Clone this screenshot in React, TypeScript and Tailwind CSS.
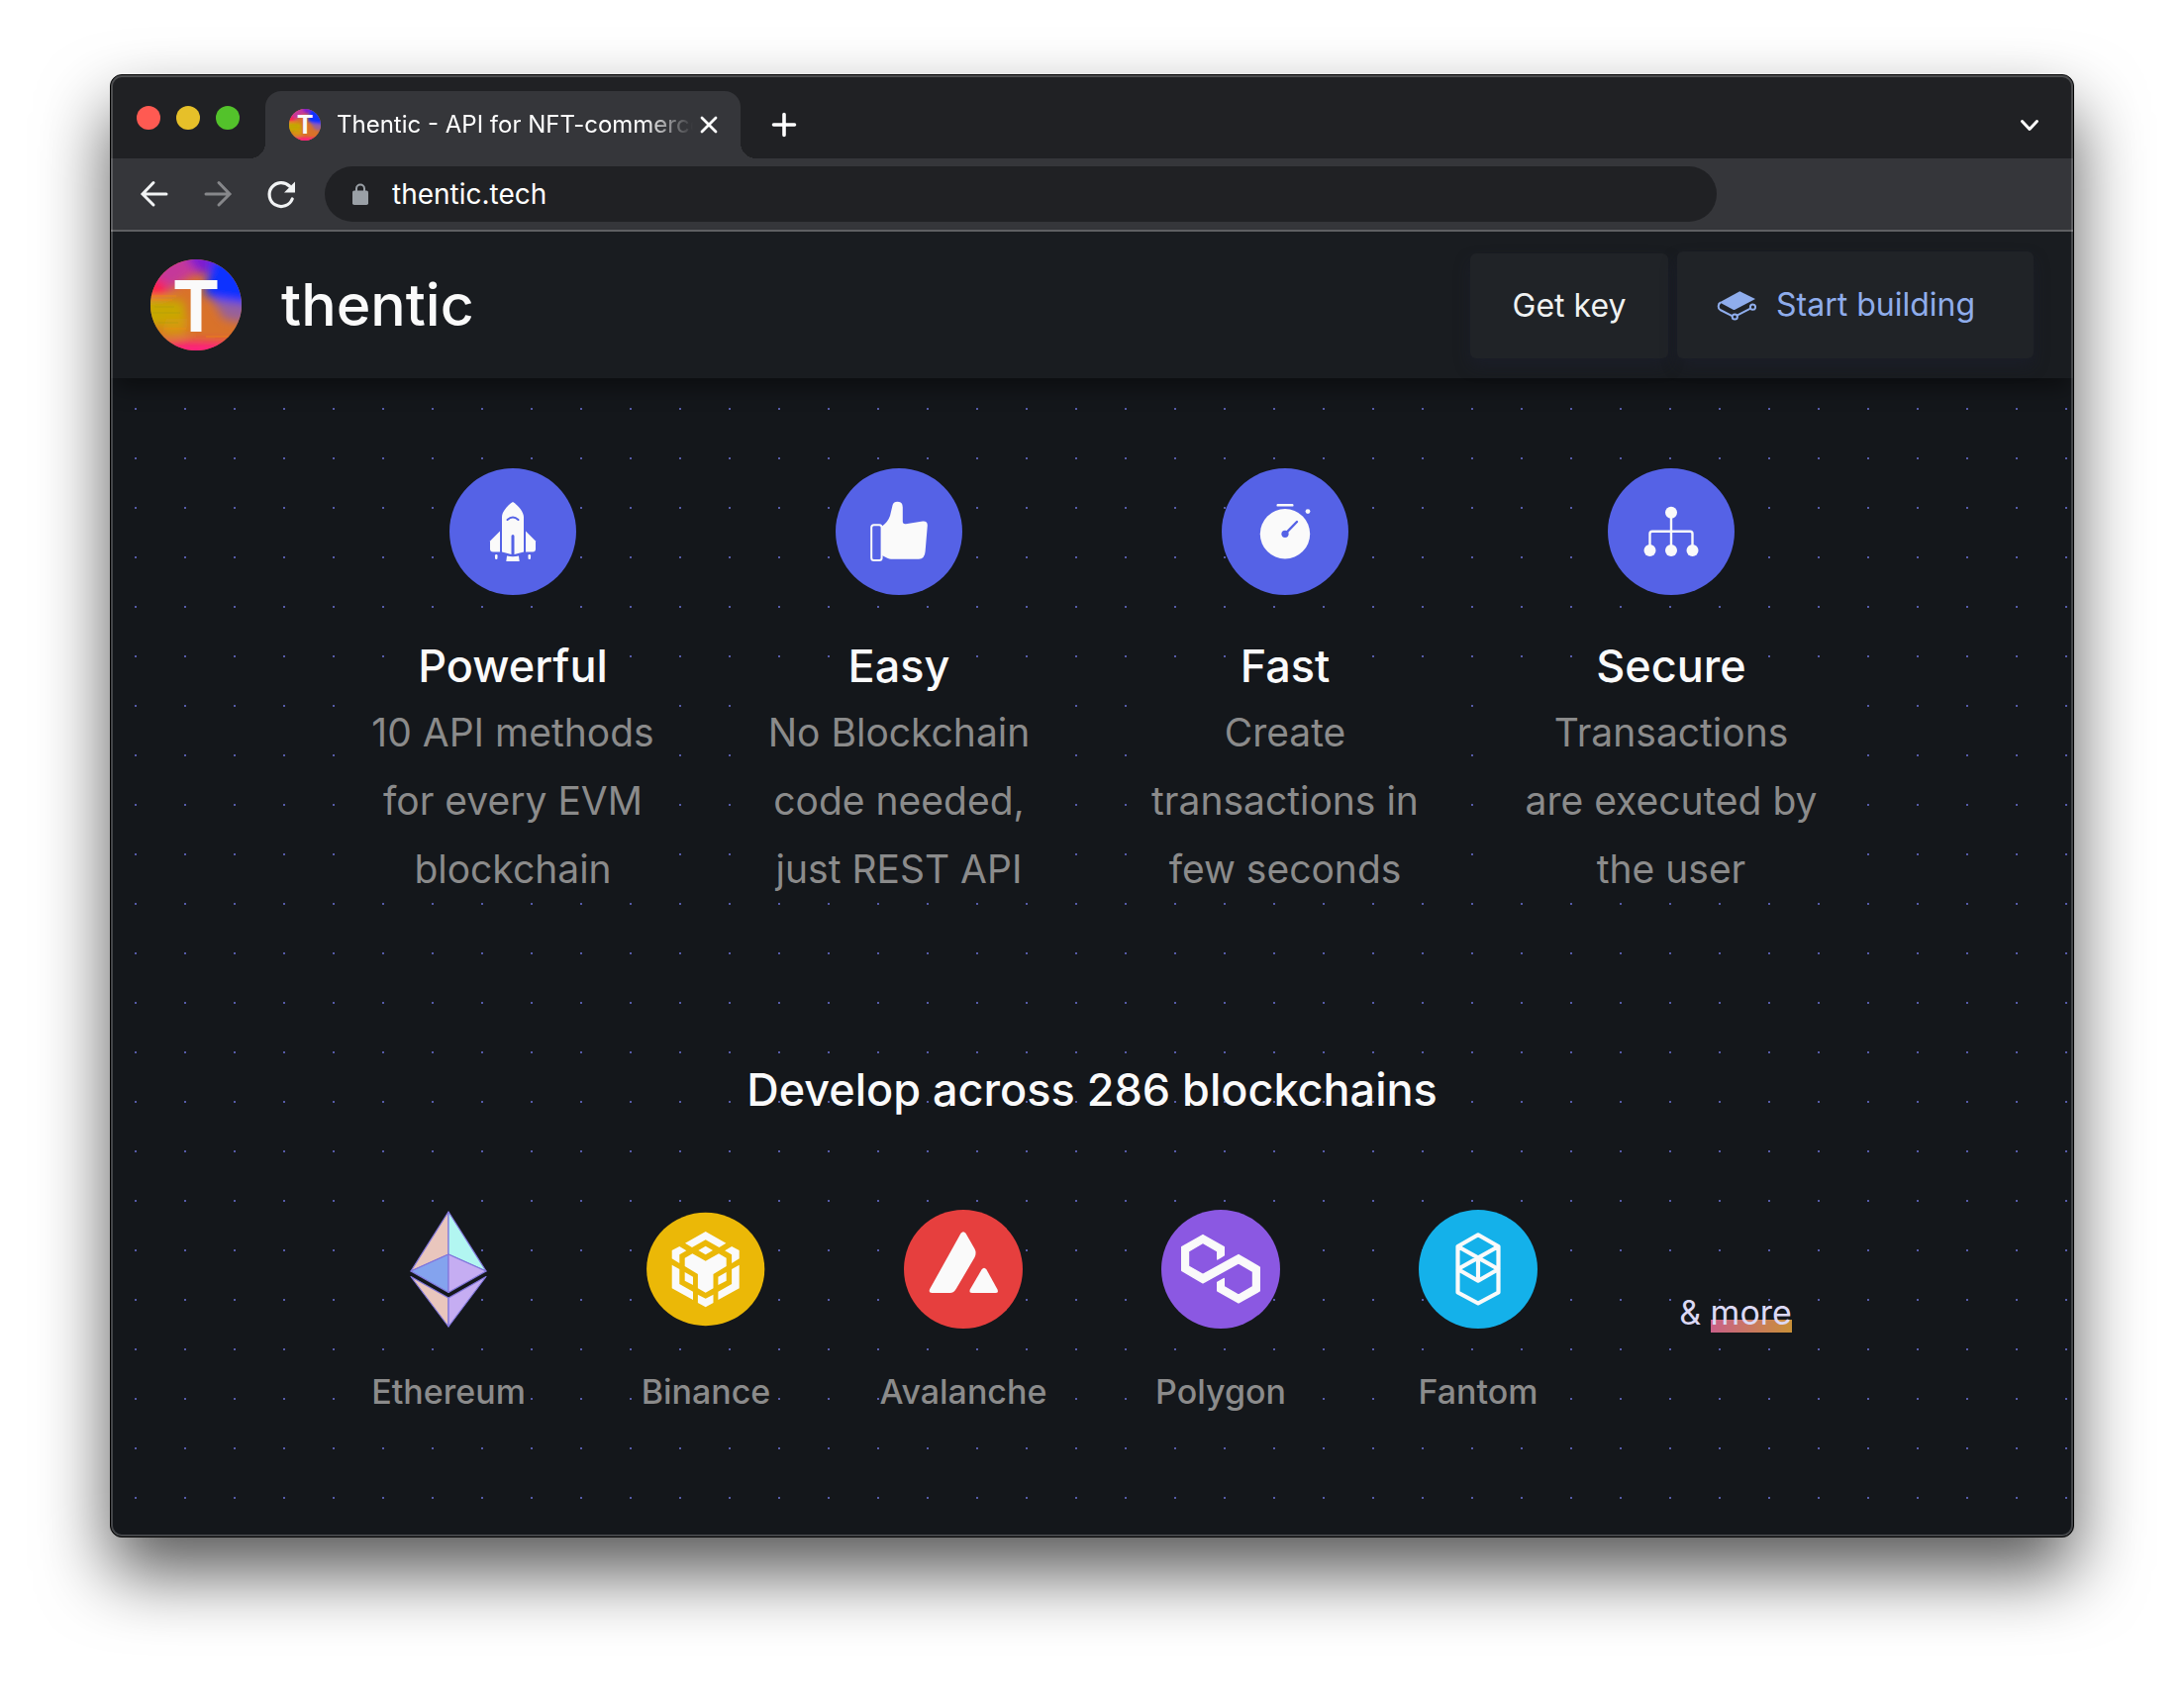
import type { ReactNode } from "react";

const DOTS =
  "bg-[radial-gradient(#565ba8_1.4px,transparent_1.4px)] bg-[length:50px_50px] bg-[position:0_6px]";

function Logo({ className }: { className: string }) {
  return (
    <svg viewBox="0 0 92 92" className={className} role="img" aria-label="Thentic logo">
      <defs>
        <clipPath id="logo-clip">
          <circle cx="46" cy="46" r="46" />
        </clipPath>
        <filter id="logo-soft" x="-20%" y="-20%" width="140%" height="140%">
          <feGaussianBlur stdDeviation="5" />
        </filter>
      </defs>
      <g clipPath="url(#logo-clip)">
        <rect width="92" height="92" fill="#d9722a" />
        <g filter="url(#logo-soft)">
          <path d="M-10-10H50V12L20 30L-10 34Z" fill="#c5389a" />
          <path d="M30-12H70V8L50 16Z" fill="#7d1fd0" />
          <path d="M-10 20L14 22L16 36L-10 38Z" fill="#ff1f4e" />
          <path d="M62 0L104-6V52L78 50L54 34Z" fill="#1030ff" />
          <path d="M62 40L104 46V66L74 60Z" fill="#96609c" />
          <path d="M-10 38L34 42L36 62L-10 70Z" fill="#c8a800" />
          <path d="M16 60L40 60L34 76L10 76Z" fill="#d59a0a" />
          <path d="M-10 88L40 83L104 85V104H-10Z" fill="#ff1a80" />
        </g>
        <path d="M0 37H26M2 41H22M14 70H36M56 78H82" stroke="#f08c10" strokeWidth="1" opacity=".7" />
        <path d="M4 48H24M2 54H30M8 64H28" stroke="#a79b10" strokeWidth="1" opacity=".5" />
      </g>
      <text
        x="46"
        y="73"
        textAnchor="middle"
        fill="#fafafa"
        className="font-['Inter',sans-serif] text-[72px] font-bold"
      >
        T
      </text>
    </svg>
  );
}

function RocketIcon() {
  return (
    <g>
      <path d="M64 34C69 37 75 44 75 49V84.500L65.500 87V68.500a1.500 1.500 0 0 0-3 0V87L53 84.500V49C53 44 59 37 64 34Z" />
      <path d="M58.500 52Q64 47 69.500 52" fill="none" stroke="#5562e6" strokeWidth="2" strokeLinecap="round" />
      <path d="M51 63.500V84.500H44Q41 84.500 41 81.500V73.500Z" />
      <path d="M77 63.500V84.500H84Q87 84.500 87 81.500V73.500Z" />
      <rect x="46" y="87" width="2.500" height="5" rx="1.200" />
      <rect x="79.500" y="87" width="2.500" height="5" rx="1.200" />
      <path d="M58 88.500Q64 90 70 88.500L70.700 94H57.300Z" />
    </g>
  );
}

function ThumbIcon() {
  return (
    <g>
      <rect x="36.200" y="57.300" width="10.400" height="35.700" rx="2.500" fill="none" stroke="#fafafa" strokeWidth="2" />
      <path d="M47 58.500Q53 54 55 48L57.500 37.500Q58.500 33.700 62.400 33.700Q67.800 33.700 67.800 39.500V53.500Q67.800 56.700 71 56.200L88 53.500Q93 53 92.800 58L90.600 84Q90 91.700 84 91.700H56Q53 91.700 47 88Z" />
    </g>
  );
}

function StopwatchIcon() {
  return (
    <g>
      <rect x="55.500" y="36" width="17" height="2.600" rx="1.200" />
      <circle cx="87" cy="43.600" r="2.400" />
      <circle cx="64" cy="66.300" r="25.200" />
      <path d="M64 66.300L76 54" stroke="#5562e6" strokeWidth="2.400" strokeLinecap="round" />
      <circle cx="64" cy="66.300" r="3.600" fill="#5562e6" />
    </g>
  );
}

function TreeIcon() {
  return (
    <g>
      <path
        d="M64 45V83M42.500 83V66Q42.500 63.700 45 63.700H83Q85.500 63.700 85.500 66V83"
        fill="none"
        stroke="#fafafa"
        strokeWidth="2.400"
      />
      <circle cx="64" cy="44.700" r="6" />
      <circle cx="42.500" cy="83" r="6" />
      <circle cx="64" cy="83" r="6" />
      <circle cx="85.500" cy="83" r="6" />
    </g>
  );
}

function EthereumLogo() {
  return (
    <g stroke="#8277dd" strokeWidth="1.200" strokeLinejoin="round">
      <path d="M60 2L22 62L60 45Z" fill="#e9c6bd" />
      <path d="M60 2L98 62L60 45Z" fill="#b2f6f1" />
      <path d="M22 62L60 45V83.500Z" fill="#84a3ee" />
      <path d="M98 62L60 45V83.500Z" fill="#c5adf2" />
      <path d="M22 67.500L60 89V118Z" fill="#e9c6bd" />
      <path d="M98 67.500L60 89V118Z" fill="#c5adf2" />
    </g>
  );
}

function BinanceLogo() {
  return (
    <g fill="#fafafa">
      <ellipse cx="59.700" cy="60" rx="59.600" ry="57.200" fill="#ebb807" />
      <path d="M59.700 22L80.400 33.700L73.400 38L59.700 30.300L46 38L39 33.700Z" />
      <path d="M59.700 36.700L67 41L59.700 45.300L52.400 41Z" />
      <path d="M33.300 37L40.300 41.300L33.300 45.300V54L25.700 49.300V41Z" />
      <path d="M86.100 37L79.100 41.300L86.100 45.300V54L93.700 49.300V41Z" />
      <path d="M25.700 55.700L33.300 60V75L47 82.700V91L25.700 79.300Z" />
      <path d="M93.700 55.700L86.100 60V75L72.400 82.700V91L93.700 79.300Z" />
      <path d="M38.700 63L47 67.700V76L38.700 71.700Z" />
      <path d="M80.700 63L72.400 67.700V76L80.700 71.700Z" />
      <path d="M46.400 44.300L59.700 51.700L73 44.300L80.700 48.700V57L67.500 65V79.300L59.700 83.700L51.900 79.300V65L38.700 57V48.700Z" />
      <path d="M51.900 85.700L59.700 89.700L67.500 85.700V94L59.700 98.300L51.900 94Z" />
    </g>
  );
}

function AvalancheLogo() {
  return (
    <g fill="#fafafa">
      <circle cx="60" cy="60" r="60" fill="#e63f3e" />
      <path d="M57.500 23.800Q60 20.500 62.500 23.800L71.500 39.500Q73.600 43.500 71.500 48L53 79.500Q50.500 84 46.500 84H28.500Q24.500 84 26.200 80Z" />
      <path d="M78.500 60.500Q81 57 83.500 60.500L94.500 80.500Q96 84 92.500 84H69Q65.500 84 66.800 80.500Z" />
    </g>
  );
}

function PolygonLogo() {
  return (
    <g>
      <circle cx="60" cy="60" r="60" fill="#8b58e2" />
      <path
        d="M42 25.500L63.300 37.700V46L56.700 50V42L42 33.500L27.500 42V57L42 65.300L78 45.500L99.300 58V82L78 94L56.700 82V73.300L63.300 69.500V77.500L78 86L92.500 77.500V62.500L78 54L42 73.800L20.700 61.300V37.700Z"
        fill="#fafafa"
        stroke="#fafafa"
        strokeWidth="1.400"
        strokeLinejoin="round"
      />
    </g>
  );
}

function FantomLogo() {
  return (
    <g>
      <circle cx="60" cy="60" r="60" fill="#14b1ea" />
      <path
        d="M60 25.300L80.500 37V83.500L60 94.500L39.500 83.500V37ZM39.500 37L80.500 60L60 71.700L39.500 60L80.500 37M60 48.500V71.700"
        fill="none"
        stroke="#fafafa"
        strokeWidth="4.200"
        strokeLinejoin="round"
      />
    </g>
  );
}

const features: { title: string; text: string; icon: ReactNode }[] = [
  { title: "Powerful", text: "10 API methods\nfor every EVM\nblockchain", icon: <RocketIcon /> },
  { title: "Easy", text: "No Blockchain\ncode needed,\njust REST API", icon: <ThumbIcon /> },
  { title: "Fast", text: "Create\ntransactions in\nfew seconds", icon: <StopwatchIcon /> },
  { title: "Secure", text: "Transactions\nare executed by\nthe user", icon: <TreeIcon /> },
];

const chains: { name: string; logo: ReactNode }[] = [
  { name: "Ethereum", logo: <EthereumLogo /> },
  { name: "Binance", logo: <BinanceLogo /> },
  { name: "Avalanche", logo: <AvalancheLogo /> },
  { name: "Polygon", logo: <PolygonLogo /> },
  { name: "Fantom", logo: <FantomLogo /> },
];

function TabStrip() {
  return (
    <div className="flex h-[84px] items-end bg-[#202124] text-white">
      <div className="flex gap-4 pr-[18px] pb-[29px] pl-[26px]">
        <button type="button" aria-label="Close window" className="size-6 rounded-full bg-[#ff5a52]" />
        <button type="button" aria-label="Minimize window" className="size-6 rounded-full bg-[#e6c029]" />
        <button type="button" aria-label="Zoom window" className="size-6 rounded-full bg-[#53c22b]" />
      </div>
      <div className="relative ml-2 flex h-[68px] w-[480px] items-center rounded-t-2xl bg-[#35363a] pr-5 pl-6 before:absolute before:bottom-0 before:-left-4 before:size-4 before:bg-[radial-gradient(circle_at_0_0,transparent_16px,#35363a_16px)] after:absolute after:-right-4 after:bottom-0 after:size-4 after:bg-[radial-gradient(circle_at_100%_0,transparent_16px,#35363a_16px)]">
        <Logo className="size-8 shrink-0" />
        <span className="ml-4 flex-1 overflow-hidden text-2xl whitespace-nowrap [mask-image:linear-gradient(to_right,#000_86%,transparent)]">
          Thentic - API for NFT-commerce
        </span>
        <button type="button" aria-label="Close tab" className="ml-1">
          <svg viewBox="0 0 24 24" className="size-6" stroke="#fff" strokeWidth="2.800" strokeLinecap="round">
            <path d="M5 5L19 19M19 5L5 19" />
          </svg>
        </button>
      </div>
      <button type="button" aria-label="New tab" className="mb-5 ml-[30px]">
        <svg viewBox="0 0 28 28" className="size-7" stroke="#fff" strokeWidth="3.600" strokeLinecap="round">
          <path d="M14 3.500V24.500M3.500 14H24.500" />
        </svg>
      </button>
      <button type="button" aria-label="Search tabs" className="mr-8 mb-[22px] ml-auto">
        <svg viewBox="0 0 24 24" className="size-6" fill="none" stroke="#fff" strokeWidth="3" strokeLinecap="round" strokeLinejoin="round">
          <path d="M4.500 8.500L12 16.500L19.500 8.500" />
        </svg>
      </button>
    </div>
  );
}

function Toolbar() {
  return (
    <div className="flex h-[74px] items-center border-b-2 border-[#5f6063] bg-[#35363a] pl-7">
      <button type="button" aria-label="Back">
        <svg viewBox="0 0 32 32" className="size-8" fill="none" stroke="#f1f3f4" strokeWidth="3" strokeLinecap="round">
          <path d="M28 16H4.500M15 4.500L4 16L15 27" />
        </svg>
      </button>
      <button type="button" aria-label="Forward" className="ml-8">
        <svg viewBox="0 0 32 32" className="size-8" fill="none" stroke="#86878a" strokeWidth="3" strokeLinecap="round">
          <path d="M4 16H27.500M17 4.500L28 16L17 27" />
        </svg>
      </button>
      <button type="button" aria-label="Reload" className="ml-8">
        <svg viewBox="0 0 32 32" className="size-8" fill="none" stroke="#f1f3f4" strokeWidth="3.200" strokeLinecap="round">
          <path d="M27.200 21A12 12 0 1 1 24.500 8" />
          <path d="M30 3.500V14.500H19Z" fill="#f1f3f4" stroke="none" />
        </svg>
      </button>
      <label className="mr-[360px] ml-7 flex h-14 flex-1 items-center rounded-full bg-[#202124] pl-7">
        <svg viewBox="0 0 16 22" className="h-[22px] w-4" fill="none">
          <path d="M4 8V5.500a4 4 0 0 1 8 0V8" stroke="#9aa0a6" strokeWidth="2" />
          <rect y="7.500" width="16" height="14.500" rx="1.800" fill="#9aa0a6" />
        </svg>
        <input
          aria-label="Address"
          defaultValue="thentic.tech"
          className="ml-6 min-w-0 flex-1 bg-transparent text-[28px] text-white outline-none"
        />
      </label>
    </div>
  );
}

function SiteHeader() {
  return (
    <header className="relative flex h-[148px] items-center justify-between bg-[#191c20] px-10 shadow-[0_15px_20px_-5px_rgba(0,0,0,0.4)]">
      <a href="#" className="flex items-center gap-10">
        <Logo className="size-[92px]" />
        <span className="text-[59px] leading-[72px] font-medium text-[#fafafa]">thentic</span>
      </a>
      <nav className="flex items-end gap-[9px]">
        <a
          href="#key"
          className="flex h-[106px] w-[200px] items-center justify-center rounded-md bg-[#202327] text-[32px] text-[#f0f2f2] shadow-[0_8px_16px_rgba(30,32,52,0.4)]"
        >
          Get key
        </a>
        <a
          href="#build"
          className="flex h-[108px] w-[360px] items-center gap-5 rounded-md bg-[#202327] pl-10 text-[32px] text-[#8fadec] shadow-[0_8px_16px_rgba(30,32,52,0.4)]"
        >
          <svg viewBox="0 0 40 31" className="h-[31px] w-10" fill="none" stroke="#8fadec" strokeWidth="2">
            <path d="M23.300 1.300L39 9L18.500 19.700Q17.500 20.200 16.500 19.700L4 13Q3 12.400 4 11.800Z" fill="#8fadec" stroke="none" />
            <path d="M4 12.500C1 14 1 18.500 3.500 20L16 26.300M20.500 25.700L34.500 18.300" />
            <circle cx="18.300" cy="27" r="2.600" />
            <circle cx="36.500" cy="17.200" r="2.600" />
          </svg>
          Start building
        </a>
      </nav>
    </header>
  );
}

export default function App() {
  return (
    <div className="min-h-screen bg-white px-[111px] pt-[75px] pb-[147px] font-['Inter',sans-serif]">
      <div className="relative overflow-hidden rounded-xl border border-black bg-[#14171b] shadow-[0_36px_70px_rgba(0,0,0,0.65)]">
        <TabStrip />
        <Toolbar />
        <SiteHeader />

        <main className={`pt-[91px] pb-[122px] ${DOTS}`}>
          <section className="mx-auto grid max-w-[1560px] grid-cols-4 text-center">
            {features.map((f) => (
              <article key={f.title} className="flex flex-col items-center px-10">
                <svg viewBox="0 0 128 128" className="mb-10 size-32 rounded-full bg-[#5562e6]" fill="#fafafa" aria-hidden="true">
                  {f.icon}
                </svg>
                <h2 className="bg-[#14171b] text-[45px] leading-[64px] font-medium text-[#fafafa]">{f.title}</h2>
                <p className="self-stretch bg-[#14171b] text-[39px] leading-[69px] whitespace-pre-line text-[#8b8b8b]">
                  {f.text}
                </p>
              </article>
            ))}
          </section>

          <section className="mx-auto mt-[157px] max-w-[1560px] text-center">
            <h2 className="text-[45px] leading-[64px] font-medium text-[#fafafa]">Develop across 286 blockchains</h2>
            <ul className="mt-[89px] grid grid-cols-6 text-[34px] leading-[48px]">
              {chains.map((c) => (
                <li key={c.name} className="flex flex-col items-center gap-10">
                  <svg viewBox="0 0 120 120" className="size-[120px]" aria-hidden="true">
                    {c.logo}
                  </svg>
                  <span className="bg-[#14171b] font-medium text-[#8b8b8b]">{c.name}</span>
                </li>
              ))}
              <li className="pt-20 text-[#dcd9f5]">
                &amp;{" "}
                <a
                  href="#more"
                  className="bg-[linear-gradient(to_right,#c96088,#c99038)] bg-[length:100%_13px] bg-[position:0_100%] bg-no-repeat"
                >
                  more
                </a>
              </li>
            </ul>
          </section>
        </main>

        <div className="pointer-events-none absolute inset-0 rounded-[11px] border-2 border-white/20" />
      </div>
    </div>
  );
}
